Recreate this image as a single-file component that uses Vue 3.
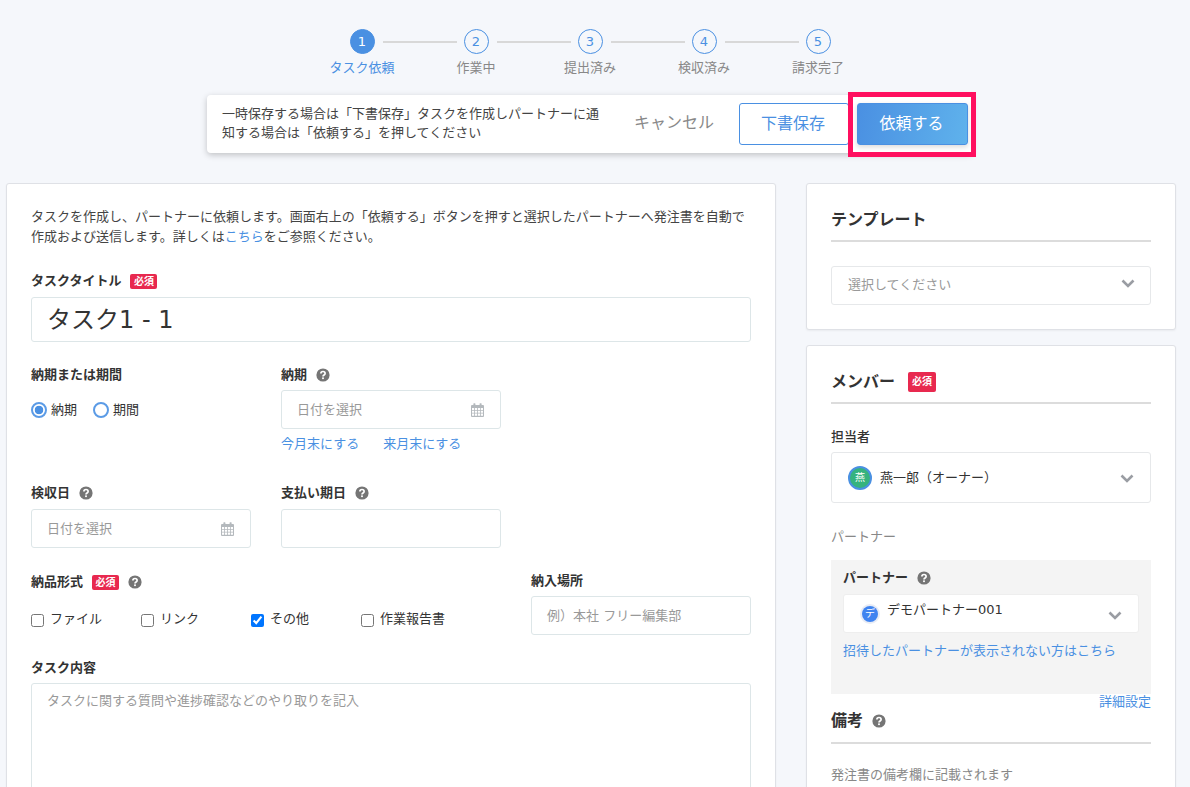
<script setup>
const steps = [
  { n: 1, label: 'タスク依頼', active: true },
  { n: 2, label: '作業中' },
  { n: 3, label: '提出済み' },
  { n: 4, label: '検収済み' },
  { n: 5, label: '請求完了' },
]
const kinds = [
  { label: 'ファイル', checked: false },
  { label: 'リンク', checked: false },
  { label: 'その他', checked: true },
  { label: '作業報告書', checked: false },
]
</script>

<template>
  <div class="page">
    <svg class="sprite" width="0" height="0" aria-hidden="true">
      <symbol id="help" viewBox="0 0 14 14">
        <circle cx="7" cy="7" r="6.6" fill="#757575" />
        <path d="M4.9 5.5c0-1.3 1-2 2.1-2s2.1.7 2.1 1.9c0 1.5-2.1 1.6-2.1 3" fill="none" stroke="#fff" stroke-width="1.7" />
        <rect x="6.1" y="9.4" width="1.8" height="1.7" fill="#fff" />
      </symbol>
      <symbol id="cal" viewBox="0 0 13 14">
        <path fill="#b4b9bd" d="M1 2h11a1 1 0 0 1 1 1v10a1 1 0 0 1-1 1H1a1 1 0 0 1-1-1V3a1 1 0 0 1 1-1z" />
        <rect x="2.4" y="0.2" width="2" height="3.2" rx="0.6" fill="#b4b9bd" />
        <rect x="8.6" y="0.2" width="2" height="3.2" rx="0.6" fill="#b4b9bd" />
        <path fill="#fff" d="M1 5h2.2v2H1zM4 5h2.1v2H4zM6.9 5H9v2H6.9zM9.8 5H12v2H9.8zM1 7.7h2.2v2H1zM4 7.7h2.1v2H4zM6.9 7.7H9v2H6.9zM9.8 7.7H12v2H9.8zM1 10.4h2.2v2.4H1zM4 10.4h2.1v2.4H4zM6.9 10.4H9v2.4H6.9zM9.8 10.4H12v2.4H9.8z" />
      </symbol>
      <symbol id="chev" viewBox="0 0 14 9">
        <path d="M1.5 1.5 7 7l5.5-5.5" fill="none" stroke="#9a9da3" stroke-width="2.6" />
      </symbol>
    </svg>

    <ol class="stepper">
      <li v-for="s in steps" :key="s.n" class="step" :class="{ active: s.active }">
        <span class="dot">{{ s.n }}</span>
        <span class="step-label">{{ s.label }}</span>
      </li>
    </ol>

    <div class="actionbar">
      <p class="action-text">一時保存する場合は「下書保存」タスクを作成しパートナーに通知する場合は「依頼する」を押してください</p>
      <span class="cancel">キャンセル</span>
      <button class="btn draft" type="button">下書保存</button>
      <button class="btn primary" type="button">依頼する</button>
      <span class="highlight"></span>
    </div>

    <div class="columns">
      <section class="card main">
        <p class="intro">タスクを作成し、パートナーに依頼します。画面右上の「依頼する」ボタンを押すと選択したパートナーへ発注書を自動で作成および送信します。詳しくは<a class="link">こちら</a>をご参照ください。</p>

        <div class="label title-label">タスクタイトル<span class="badge">必須</span></div>
        <div class="field title-input">タスク1 - 1</div>

        <div class="grid row-date">
          <div>
            <div class="label">納期または期間</div>
            <div class="radios">
              <span class="radio on"></span><span class="radio-text">納期</span>
              <span class="radio"></span><span class="radio-text">期間</span>
            </div>
          </div>
          <div>
            <div class="label">納期<svg class="help"><use href="#help" /></svg></div>
            <div class="field date"><span class="ph">日付を選択</span><svg class="cal"><use href="#cal" /></svg></div>
            <div class="quick"><a class="link">今月末にする</a><a class="link">来月末にする</a></div>
          </div>
        </div>

        <div class="grid row-accept">
          <div>
            <div class="label">検収日<svg class="help"><use href="#help" /></svg></div>
            <div class="field date"><span class="ph">日付を選択</span><svg class="cal"><use href="#cal" /></svg></div>
          </div>
          <div>
            <div class="label">支払い期日<svg class="help"><use href="#help" /></svg></div>
            <div class="field date"></div>
          </div>
        </div>

        <div class="row-kind">
          <div class="kind-col">
            <div class="label">納品形式<span class="badge">必須</span><svg class="help"><use href="#help" /></svg></div>
            <div class="checks">
              <label v-for="k in kinds" :key="k.label" class="check">
                <input type="checkbox" :checked="k.checked" />
                <span>{{ k.label }}</span>
              </label>
            </div>
          </div>
          <div class="place-col">
            <div class="label">納入場所</div>
            <div class="field date"><span class="ph">例）本社 フリー編集部</span></div>
          </div>
        </div>

        <div class="label content-label">タスク内容</div>
        <div class="field textarea"><span class="ph">タスクに関する質問や進捗確認などのやり取りを記入</span></div>
      </section>

      <aside class="side">
        <section class="card side-card template">
          <h2 class="heading">テンプレート</h2>
          <div class="select template-select"><span class="ph">選択してください</span><svg class="chev"><use href="#chev" /></svg></div>
        </section>

        <section class="card side-card member">
          <h2 class="heading">メンバー<span class="badge big">必須</span></h2>
          <div class="label owner-label">担当者</div>
          <div class="select owner">
            <span class="avatar green">燕</span>
            <span class="value">燕一郎（オーナー）</span>
            <svg class="chev"><use href="#chev" /></svg>
          </div>
          <div class="partner-title">パートナー</div>
          <div class="partner-box">
            <div class="label">パートナー<svg class="help"><use href="#help" /></svg></div>
            <div class="select partner">
              <span class="avatar blue">デ</span>
              <span class="value">デモパートナー001</span>
              <svg class="chev"><use href="#chev" /></svg>
            </div>
            <a class="link invite">招待したパートナーが表示されない方はこちら</a>
          </div>
          <div class="detail"><a class="link">詳細設定</a></div>
          <h2 class="heading note">備考<svg class="help"><use href="#help" /></svg></h2>
          <p class="note-text">発注書の備考欄に記載されます</p>
        </section>
      </aside>
    </div>
  </div>
</template>

<style>
html, body { margin: 0; height: 787px; overflow: hidden; background: #f5f7fb; }
</style>

<style scoped>
.page {
  box-sizing: border-box;
  width: 1190px;
  height: 787px;
  overflow: hidden;
  padding: 29px 16px 0 6px;
  background: #f5f7fb;
  color: #333;
  font-family: "DejaVu Sans", "Noto Sans CJK JP", sans-serif;
  font-size: 13px;
  line-height: 20px;
}
.sprite { position: absolute; }
p, h2, ol { margin: 0; padding: 0; }
.link { color: #4a90e2; }

.stepper { display: flex; justify-content: center; list-style: none; height: 66px; }
.step { position: relative; width: 114px; display: flex; flex-direction: column; align-items: center; }
.step:not(:last-child)::after {
  content: "";
  position: absolute;
  left: 78px;
  top: 12px;
  width: 74px;
  height: 2px;
  background: #d8d8d8;
}
.dot {
  box-sizing: border-box;
  width: 25px;
  height: 25px;
  border: 1px solid #4a90e2;
  border-radius: 50%;
  color: #4a90e2;
  font-size: 13px;
  line-height: 23px;
  text-align: center;
}
.step.active .dot { background: #4a90e2; color: #fff; }
.step-label { margin-top: 4px; color: #888; font-size: 13px; line-height: 20px; white-space: nowrap; }
.step.active .step-label { color: #4a90e2; }

.actionbar {
  position: relative;
  box-sizing: border-box;
  display: flex;
  align-items: center;
  width: 765px;
  height: 58px;
  margin-left: 201px;
  padding-left: 15px;
  background: #fff;
  border-radius: 4px;
  box-shadow: 0 2px 6px rgba(0, 0, 0, 0.22);
}
.action-text { width: 381px; margin-top: -2px; line-height: 19px; color: #444; }
.cancel { margin: -2px 0 0 31px; width: 81px; color: #888; font-size: 16px; white-space: nowrap; }
.btn {
  box-sizing: border-box;
  height: 42px;
  border-radius: 3px;
  font: inherit;
  font-size: 16px;
  padding: 0 2px 0 0;
}
.draft { margin-left: 24px; width: 110px; border: 1px solid #4a90e2; background: #fff; color: #4a90e2; }
.primary {
  margin-left: 8px;
  width: 111px;
  border: 1px solid #4a90e2;
  background: linear-gradient(100deg, #4a90e2, #5fb2ec);
  color: #fff;
  box-shadow: 0 2px 5px rgba(0, 0, 0, 0.15);
}
.highlight {
  position: absolute;
  left: 641px;
  top: -3px;
  box-sizing: border-box;
  width: 128px;
  height: 65px;
  border: 5px solid #ff0f5f;
}

.columns { display: grid; grid-template-columns: 770px 370px; gap: 30px; margin-top: 30px; }
.card {
  box-sizing: border-box;
  background: #fff;
  border: 1px solid #dfe1e6;
  border-radius: 3px;
  box-shadow: 0 1px 2px rgba(0, 0, 0, 0.05);
}
.main { padding: 23px 24px 0; height: 700px; }
.side { display: flex; flex-direction: column; gap: 15px; }
.side-card { padding: 0 24px; }

.intro { color: #444; }
.label {
  display: flex;
  align-items: center;
  font-weight: 700;
  font-size: 13px;
  line-height: 20px;
  color: #333;
}
.badge {
  display: inline-block;
  margin-left: 9px;
  width: 27px;
  height: 15px;
  border-radius: 2px;
  background: #e8294f;
  color: #fff;
  font-size: 10px;
  font-weight: 700;
  line-height: 15px;
  text-align: center;
}
.badge.big { margin-left: 13px; width: 28px; height: 20px; font-size: 10px; line-height: 20px; }
.help { width: 14px; height: 14px; margin-left: 9px; }

.title-label { margin-top: 24px; }
.field {
  box-sizing: border-box;
  display: flex;
  align-items: center;
  justify-content: space-between;
  background: #fff;
  border: 1px solid #dde6e8;
  border-radius: 3px;
  padding: 0 16px 0 15px;
}
.title-input { margin-top: 6px; height: 45px; font-size: 24px; color: #333; }
.ph { color: #999; }
.cal { width: 13px; height: 14px; }

.grid { display: grid; grid-template-columns: 220px 220px; column-gap: 30px; }
.row-date { margin-top: 23px; height: 118px; }
.row-date .field, .place-col .field { margin-top: 5px; height: 39px; }
.row-accept .field { margin-top: 6px; height: 39px; }
.radios { display: flex; align-items: center; margin-top: 15px; height: 20px; }
.radio {
  box-sizing: border-box;
  width: 16px;
  height: 16px;
  flex: none;
  border: 2px solid #5b9be6;
  border-radius: 50%;
  background: #fff;
}
.radio.on { background: radial-gradient(circle, #4a90e2 0 4px, #fff 4.6px); }
.radio-text { margin: 0 16px 0 4px; color: #333; }
.quick { display: flex; gap: 24px; margin-top: 5px; }

.row-accept { margin-top: 0; }
.row-accept .label { height: 20px; }

.row-kind { display: flex; margin-top: 22px; }
.kind-col { width: 500px; padding-top: 2px; }
.checks { display: flex; margin-top: 16px; }
.check { display: flex; align-items: center; width: 110px; height: 22px; white-space: nowrap; }
.check input { width: 13px; height: 13px; margin: 2px 6px 0 0; }
.place-col { width: 220px; padding-top: 1px; }

.content-label { margin-top: 23px; }
.textarea { margin-top: 5px; height: 260px; align-items: flex-start; padding-top: 7px; }

.template { height: 147px; padding-top: 22px; }
.member { height: 460px; padding-top: 22px; }
.heading {
  display: flex;
  align-items: center;
  height: 24px;
  padding: 2px 0 8px;
  border-bottom: 2px solid #dcdcdc;
  font-size: 16px;
  font-weight: 700;
  line-height: 24px;
  color: #333;
}
.select {
  box-sizing: border-box;
  display: flex;
  align-items: center;
  background: #fff;
  border: 1px solid #e6e8ea;
  border-radius: 3px;
  padding: 0 15px 0 16px;
}
.chev { width: 14px; height: 9px; margin-left: auto; }
.template-select { margin-top: 24px; height: 39px; }
.template-select .ph { margin-top: -2px; }
.template-select .chev { margin-top: -4px; }
.owner-label { margin-top: 23px; font-weight: 500; }
.owner { margin-top: 5px; height: 51px; padding-right: 16px; }
.owner .chev { margin-top: 2px; }
.avatar {
  box-sizing: border-box;
  flex: none;
  border-radius: 50%;
  color: #fff;
  text-align: center;
}
.avatar.green {
  width: 24px;
  height: 24px;
  border: 2px solid #4a90e2;
  background: #35b37e;
  font-size: 10px;
  line-height: 20px;
}
.avatar.blue {
  width: 16px;
  height: 16px;
  margin-top: 0;
  background: #3f83f0;
  box-shadow: 0 0 0 2px #e8ecf5;
  font-size: 10px;
  line-height: 16px;
}
.value { color: #333; white-space: nowrap; }
.owner .value { margin: 0 0 0 8px; }
.partner-title { margin-top: 24px; color: #888; }
.partner-box { box-sizing: border-box; height: 134px; margin-top: 13px; padding: 8px 12px 0; background: #f4f4f4; }
.partner { height: 39px; margin-top: 6px; padding-left: 18px; padding-right: 14px; border-color: #eeeeee; }
.partner .value { margin: -8px 0 0 9px; }
.partner .chev { margin-right: 2px; margin-top: 3px; }
.invite { display: block; margin-top: 8px; }
.detail { display: flex; justify-content: flex-end; height: 16px; margin-top: -2px; }
.heading.note { margin-top: -2px; height: 26px; }
.note-text { margin-top: 21px; color: #888; }
</style>
